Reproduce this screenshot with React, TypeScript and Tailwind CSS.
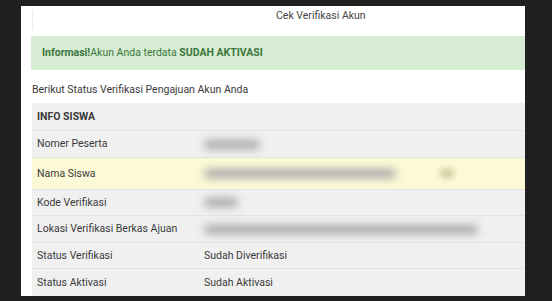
import React from "react";

const font = { fontFamily: "Roboto, 'Liberation Sans', sans-serif" };

function Blur({ w, dot }: { w: number; dot?: boolean }) {
  return (
    <div className="flex items-center">
      <div className="h-[9px] rounded-full bg-[#a8a8a8] blur-[4px]" style={{ width: w }} />
      {dot && <div className="ml-[44px] h-[9px] w-[14px] rounded-full bg-[#cbc69c] blur-[3px]" />}
    </div>
  );
}

type Row = { label: string; value?: string; blur?: number; dot?: boolean; h: string; yellow?: boolean };

const rows: Row[] = [
  { label: "Nomer Peserta", blur: 56, h: "h-[27px]" },
  { label: "Nama Siswa", blur: 192, dot: true, h: "h-[32px]", yellow: true },
  { label: "Kode Verifikasi", blur: 34, h: "h-[26px]" },
  { label: "Lokasi Verifikasi Berkas Ajuan", blur: 274, h: "h-[27px]" },
  { label: "Status Verifikasi", value: "Sudah Diverifikasi", h: "h-[26px]" },
  { label: "Status Aktivasi", value: "Sudah Aktivasi", h: "h-[28px]" },
];

export default function App() {
  return (
    <div className="w-[552px] h-[301px] bg-[#1f1f1f] pt-[6px] pl-[21px] overflow-hidden" style={font}>
      <div className="w-[504px] h-[290px] bg-white flex flex-col">
        <div className="h-[30px] flex items-start pt-[4px]">
          <div className="ml-[11px] h-[20px] border-l border-[#ececec]">
            <div className="ml-[243px] leading-[12px] text-[10.5px] text-[#444]">Cek Verifikasi Akun</div>
          </div>
        </div>
        <div className="ml-[10px] h-[34px] bg-[#d6ecd3] flex items-center pl-[11px] text-[10.5px] text-[#3c763d]">
          <span className="font-bold">Informasi!</span>
          <span>Akun Anda terdata&nbsp;</span>
          <span className="font-bold">SUDAH AKTIVASI</span>
        </div>
        <div className="ml-[11px] h-[33px] pt-[14px] leading-[12px] text-[10.5px] text-[#3a3a3a]">
          Berikut Status Verifikasi Pengajuan Akun Anda
        </div>
        <div className="ml-[11px] bg-[#f0f0f0] flex-1 text-[10.5px] text-[#3a3a3a]">
          <div className="h-[27px] flex items-center pl-[5px] font-bold">INFO SISWA</div>
          {rows.map((r) => (
            <div
              key={r.label}
              className={`${r.h} flex items-center border-t border-[#e3e3e3] ${r.yellow ? "bg-[#fcf9d6]" : ""}`}
            >
              <div className="w-[172px] pl-[5px]">{r.label}</div>
              <div className="flex-1">
                {r.value ? r.value : <Blur w={r.blur ?? 40} dot={r.dot} />}
              </div>
            </div>
          ))}
        </div>
      </div>
    </div>
  );
}
